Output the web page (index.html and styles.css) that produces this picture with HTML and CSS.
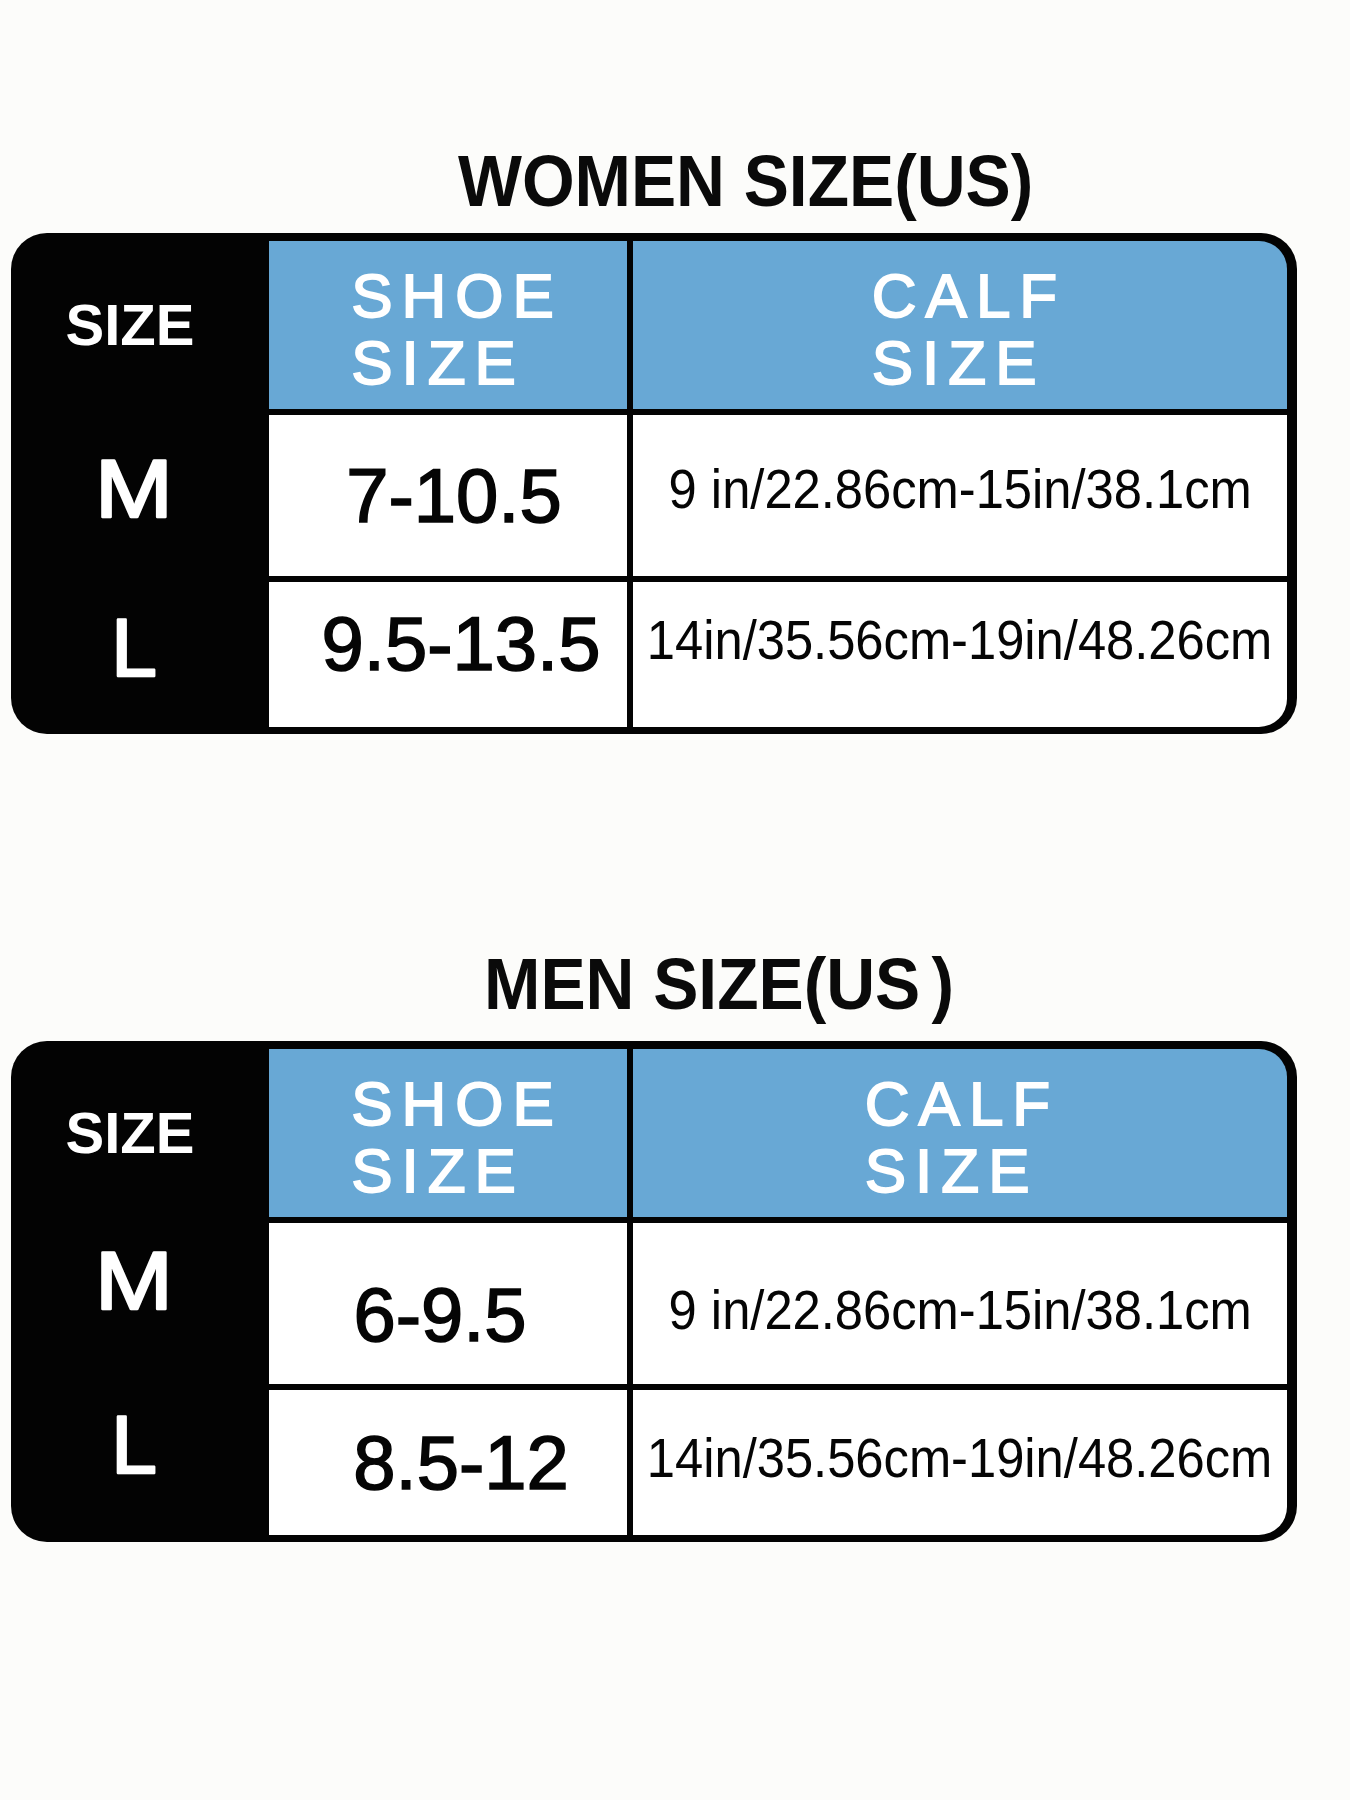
FILE: index.html
```html
<!DOCTYPE html>
<html lang="en">
<head>
<meta charset="utf-8">
<title>Size Chart</title>
<link rel="stylesheet" href="styles.css">
</head>
<body>
<div class="page">
  <h2 class="title title-women"><span class="title-text">WOMEN SIZE(US)</span></h2>
  <div class="chart chart-women">
    <div class="lbl lbl-head">SIZE</div>
    <div class="hd"><span class="hd-text">SHOE<br>SIZE</span></div>
    <div class="hd hd-calf"><span class="hd-text">CALF<br>SIZE</span></div>

    <div class="lbl lbl-hand hand-women"><svg class="hand" viewBox="0 0 100 90" width="100" height="90"><text class="hand-m" x="50" y="76" text-anchor="middle">M</text></svg></div>
    <div class="cell pad-l-sm"><span class="shoe-val">7-10.5</span></div>
    <div class="cell pad-b-sm"><span class="calf-val">9 in/22.86cm-15in/38.1cm</span></div>

    <div class="lbl lbl-hand hand-women"><svg class="hand" viewBox="0 0 100 90" width="100" height="90"><text x="50" y="76" text-anchor="middle">L</text></svg></div>
    <div class="cell pad-l pad-b"><span class="shoe-val">9.5-13.5</span></div>
    <div class="cell cell-last pad-b-lg"><span class="calf-val">14in/35.56cm-19in/48.26cm</span></div>
  </div>

  <h2 class="title title-men"><span class="title-text">MEN SIZE(US<span class="paren-gap">)</span></span></h2>
  <div class="chart chart-men">
    <div class="lbl lbl-head">SIZE</div>
    <div class="hd"><span class="hd-text">SHOE<br>SIZE</span></div>
    <div class="hd hd-calf"><span class="hd-text hd-text-men">CALF<br>SIZE</span></div>

    <div class="lbl lbl-hand hand-men"><svg class="hand" viewBox="0 0 100 90" width="100" height="90"><text class="hand-m" x="50" y="76" text-anchor="middle">M</text></svg></div>
    <div class="cell pad-r pad-t"><span class="shoe-val">6-9.5</span></div>
    <div class="cell pad-t-sm"><span class="calf-val">9 in/22.86cm-15in/38.1cm</span></div>

    <div class="lbl lbl-hand hand-men-l"><svg class="hand" viewBox="0 0 100 90" width="100" height="90"><text x="50" y="76" text-anchor="middle">L</text></svg></div>
    <div class="cell pad-l"><span class="shoe-val">8.5-12</span></div>
    <div class="cell cell-last pad-b-xs"><span class="calf-val">14in/35.56cm-19in/48.26cm</span></div>
  </div>
</div>
</body>
</html>
```

FILE: styles.css
```css
html, body {
  margin: 0;
  padding: 0;
  background: #fcfcfa;
}

body {
  font-family: "Liberation Sans", Arial, sans-serif;
  width: 1350px;
  min-height: 1800px;
}

.page {
  padding-top: 145px;
  padding-bottom: 200px;
}

.title {
  margin: 0;
  font-size: 72px;
  line-height: 72px;
  font-weight: 700;
  color: #0a0a0a;
  white-space: nowrap;
}

.title-text {
  display: inline-block;
  transform: scaleX(0.94);
  transform-origin: left center;
}

.title-women {
  padding-left: 458px;
}

.title-men {
  padding-left: 484px;
  margin-top: 214px;
}

.paren-gap {
  margin-left: 12px;
}

.chart {
  box-sizing: border-box;
  width: 1286px;
  margin-left: 11px;
  background: #030303;
  border-radius: 36px;
  padding: 8px 10px 7px 0;
  display: grid;
  grid-template-columns: 252px 358px 654px;
  grid-template-rows: 168px 161px 145px;
  column-gap: 6px;
  row-gap: 6px;
}

.chart-women {
  margin-top: 16px;
}

.chart-men {
  margin-top: 21px;
}

.lbl {
  color: #fff;
  display: flex;
  align-items: center;
  justify-content: center;
}

.lbl-head {
  font-size: 58px;
  font-weight: 700;
  line-height: 1;
  padding-right: 14px;
}

.lbl-hand {
  padding-right: 6px;
  box-sizing: border-box;
}

.hand {
  display: block;
  overflow: visible;
}

.hand text {
  font-family: "Liberation Sans", Arial, sans-serif;
  font-size: 82px;
  font-weight: 400;
  fill: #fff;
  stroke: #fff;
  stroke-width: 2.5;
  stroke-linejoin: round;
  stroke-linecap: round;
}

.hand .hand-m {
  transform-box: fill-box;
  transform-origin: center;
  transform: scaleX(1.14);
}

.hand-women {
  padding-bottom: 20px;
}

.hand-men {
  padding-bottom: 52px;
}

.hand-men-l {
  padding-bottom: 42px;
}

.hd {
  background: #68a8d5;
  color: #fff;
  display: flex;
  align-items: center;
  justify-content: center;
}

.hd-calf {
  border-top-right-radius: 28px;
}

.hd-text {
  font-size: 62px;
  font-weight: 400;
  -webkit-text-stroke: 1.8px #fff;
  line-height: 67px;
  letter-spacing: 9px;
  padding-left: 18px;
  padding-top: 8px;
  text-align: left;
}

.hd-text-men {
  padding-left: 4px;
}

.cell {
  background: #fff;
  color: #050505;
  display: flex;
  align-items: center;
  justify-content: center;
  box-sizing: border-box;
}

.cell-last {
  border-bottom-right-radius: 28px;
}

.shoe-val {
  font-size: 76px;
  line-height: 1;
  -webkit-text-stroke: 1.6px #050505;
  white-space: nowrap;
}

.calf-val {
  display: inline-block;
  font-size: 56px;
  line-height: 1;
  white-space: nowrap;
  transform: scaleX(0.905);
}

.pad-l-sm { padding-left: 12px; }
.pad-l { padding-left: 26px; }
.pad-r { padding-right: 16px; }
.pad-t { padding-top: 22px; }
.pad-t-sm { padding-top: 12px; }
.pad-b-xs { padding-bottom: 10px; }
.pad-b-sm { padding-bottom: 14px; }
.pad-b { padding-bottom: 22px; }
.pad-b-lg { padding-bottom: 30px; }
```
